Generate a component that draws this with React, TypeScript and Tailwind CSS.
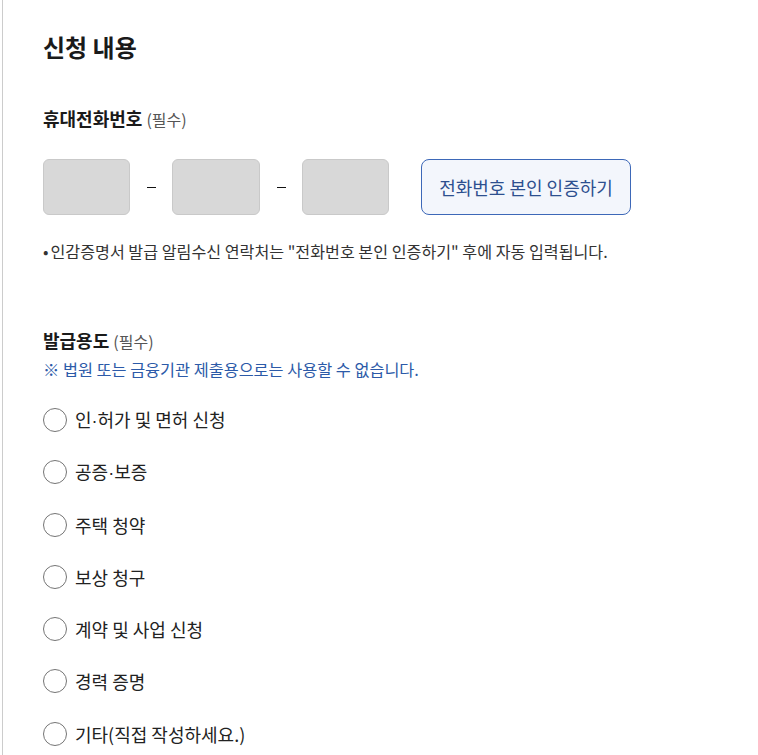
export default function App() {
  const purposes = [
    '인·허가 및 면허 신청',
    '공증·보증',
    '주택 청약',
    '보상 청구',
    '계약 및 사업 신청',
    '경력 증명',
    '기타(직접 작성하세요.)',
  ];

  // keep the middle dot proportional (CJK font draws it full width)
  const renderLabel = (text: string) =>
    text.split('·').map((part, i) => (
      <span key={i}>
        {i > 0 && <span style={{ fontFamily: '"Liberation Sans", sans-serif' }}>·</span>}
        {part}
      </span>
    ));

  return (
    <div
      className="min-h-[755px] bg-white text-[#1a1a1a]"
      style={{ fontFamily: '"Noto Sans CJK KR", "Noto Sans", sans-serif' }}
    >
      <div className="ml-[2px] min-h-[755px] border-l border-[#cccccc] pl-[40px] pt-[31px]">
        {/* Section title */}
        <h2 className="text-[24px] font-bold leading-[32px]">신청 내용</h2>

        {/* Phone number */}
        <div className="mt-[43px] text-[18px] font-bold leading-[24px]">
          휴대전화번호 <span className="text-[16px] font-normal text-[#555]">(필수)</span>
        </div>

        <div className="mt-[28px] flex items-start">
          <div className="h-[56px] w-[87px] rounded-md border border-[#c9c9c9] bg-[#d8d8d8]" />
          <div className="ml-[17px] mr-[16px] mt-[28px] h-px w-[9px] bg-[#111]" />
          <div className="h-[56px] w-[88px] rounded-md border border-[#c9c9c9] bg-[#d8d8d8]" />
          <div className="ml-[17px] mr-[16px] mt-[28px] h-px w-[9px] bg-[#111]" />
          <div className="h-[56px] w-[87px] rounded-md border border-[#c9c9c9] bg-[#d8d8d8]" />
          <button className="ml-[32px] h-[56px] w-[210px] rounded-lg border border-[#3d68b8] bg-[#f3f6fc] text-[18px] text-[#2d4f8f]">
            전화번호 본인 인증하기
          </button>
        </div>

        <p className="mt-[25px] text-[16.15px] leading-[22px] text-[#333]">
          <span className="mr-[2px]">•</span>인감증명서 발급 알림수신 연락처는 "전화번호 본인 인증하기" 후에 자동 입력됩니다.
        </p>

        {/* Purpose */}
        <div className="mt-[66px] text-[18px] font-bold leading-[24px]">
          발급용도 <span className="text-[16px] font-normal text-[#555]">(필수)</span>
        </div>
        <p className="mt-[5px] text-[16.3px] leading-[22px] text-[#2c5aa8]">
          ※ 법원 또는 금융기관 제출용으로는 사용할 수 없습니다.
        </p>

        <div className="mt-[28px] flex flex-col gap-[28.3px]">
          {purposes.map((p) => (
            <label key={p} className="flex h-6 items-center gap-2">
              <span className="h-6 w-6 shrink-0 rounded-full border border-[#757575] bg-white" />
              <span className="text-[18px] leading-6 text-[#222]">{renderLabel(p)}</span>
            </label>
          ))}
        </div>
      </div>
    </div>
  );
}
